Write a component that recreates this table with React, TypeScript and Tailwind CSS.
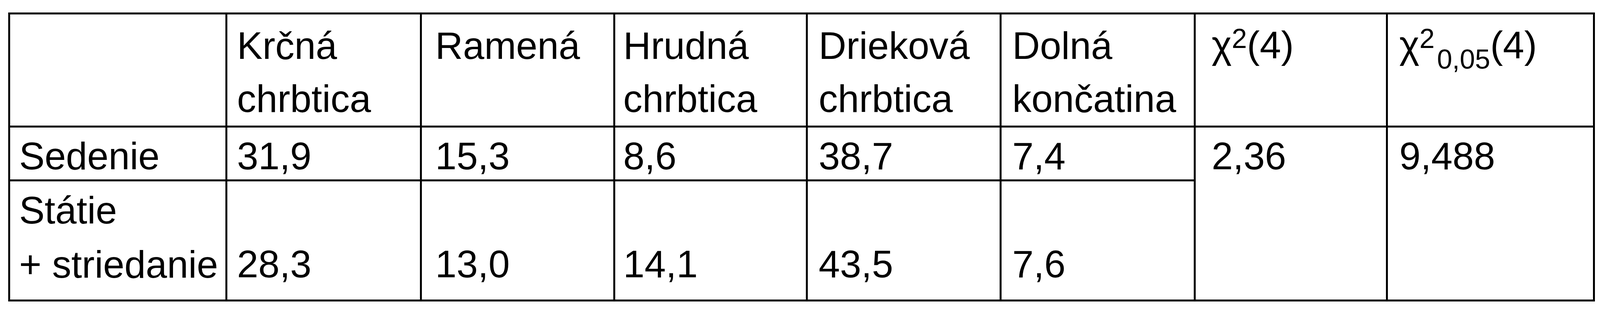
import React from "react";

const pads = [
  "pl-[4.1%]",
  "pl-[5%]",
  "pl-[7.07%]",
  "pl-[4.23%]",
  "pl-[5.69%]",
  "pl-[5.56%]",
  "pl-[8.47%]",
  "pl-[5.58%]",
];

const base =
  "min-w-0 bg-white text-black font-['Liberation_Sans',Arial,Helvetica,sans-serif] text-[98px] whitespace-nowrap";

export default function App() {
  return (
    <div className="min-h-[800px] w-full bg-white pl-[0.522%] pr-[0.31%] pt-[32px]">
      <div className="grid grid-cols-[minmax(0,827fr)_minmax(0,740fr)_minmax(0,736fr)_minmax(0,733fr)_minmax(0,738fr)_minmax(0,738fr)_minmax(0,732fr)_minmax(0,789fr)] grid-rows-[285px_133px_303px] gap-[5px] bg-black p-[5px]">
        {/* header row */}
        <div className={`${base} ${pads[0]}`} />
        <div className={`${base} ${pads[1]} pt-[12px] leading-[136px]`}>
          <div>Krčná</div>
          <div>chrbtica</div>
        </div>
        <div className={`${base} ${pads[2]} pt-[12px] leading-[136px]`}>
          <div>Ramená</div>
        </div>
        <div className={`${base} ${pads[3]} pt-[12px] leading-[136px]`}>
          <div>Hrudná</div>
          <div>chrbtica</div>
        </div>
        <div className={`${base} ${pads[4]} pt-[12px] leading-[136px]`}>
          <div>Drieková</div>
          <div>chrbtica</div>
        </div>
        <div className={`${base} ${pads[5]} pt-[12px] leading-[136px]`}>
          <div>Dolná</div>
          <div>končatina</div>
        </div>
        <div className={`${base} ${pads[6]} pt-[10px] leading-[136px]`}>
          <div>
            χ<sup className="text-[70px] top-[-26px]">2</sup>(4)
          </div>
        </div>
        <div className={`${base} ${pads[7]} pt-[10px] leading-[136px]`}>
          <div>
            χ<sup className="text-[70px] top-[-26px]">2</sup>
            <sub className="text-[70px] bottom-[-27px] ml-[6px]">0,05</sub>(4)
          </div>
        </div>

        {/* row: Sedenie */}
        <div className={`${base} ${pads[0]} pt-[5px] leading-[136px]`}>Sedenie</div>
        <div className={`${base} ${pads[1]} pt-[5px] leading-[136px]`}>31,9</div>
        <div className={`${base} ${pads[2]} pt-[5px] leading-[136px]`}>15,3</div>
        <div className={`${base} ${pads[3]} pt-[5px] leading-[136px]`}>8,6</div>
        <div className={`${base} ${pads[4]} pt-[5px] leading-[136px]`}>38,7</div>
        <div className={`${base} ${pads[5]} pt-[5px] leading-[136px]`}>7,4</div>
        <div className={`${base} ${pads[6]} row-span-2 pt-[5px] leading-[136px]`}>2,36</div>
        <div className={`${base} ${pads[7]} row-span-2 pt-[5px] leading-[136px]`}>9,488</div>

        {/* row: Státie + striedanie */}
        <div className={`${base} ${pads[0]} pt-[5px] leading-[139px]`}>
          <div>Státie</div>
          <div>+ striedanie</div>
        </div>
        <div className={`${base} ${pads[1]} pt-[143px] leading-[139px]`}>28,3</div>
        <div className={`${base} ${pads[2]} pt-[143px] leading-[139px]`}>13,0</div>
        <div className={`${base} ${pads[3]} pt-[143px] leading-[139px]`}>14,1</div>
        <div className={`${base} ${pads[4]} pt-[143px] leading-[139px]`}>43,5</div>
        <div className={`${base} ${pads[5]} pt-[143px] leading-[139px]`}>7,6</div>
      </div>
    </div>
  );
}
